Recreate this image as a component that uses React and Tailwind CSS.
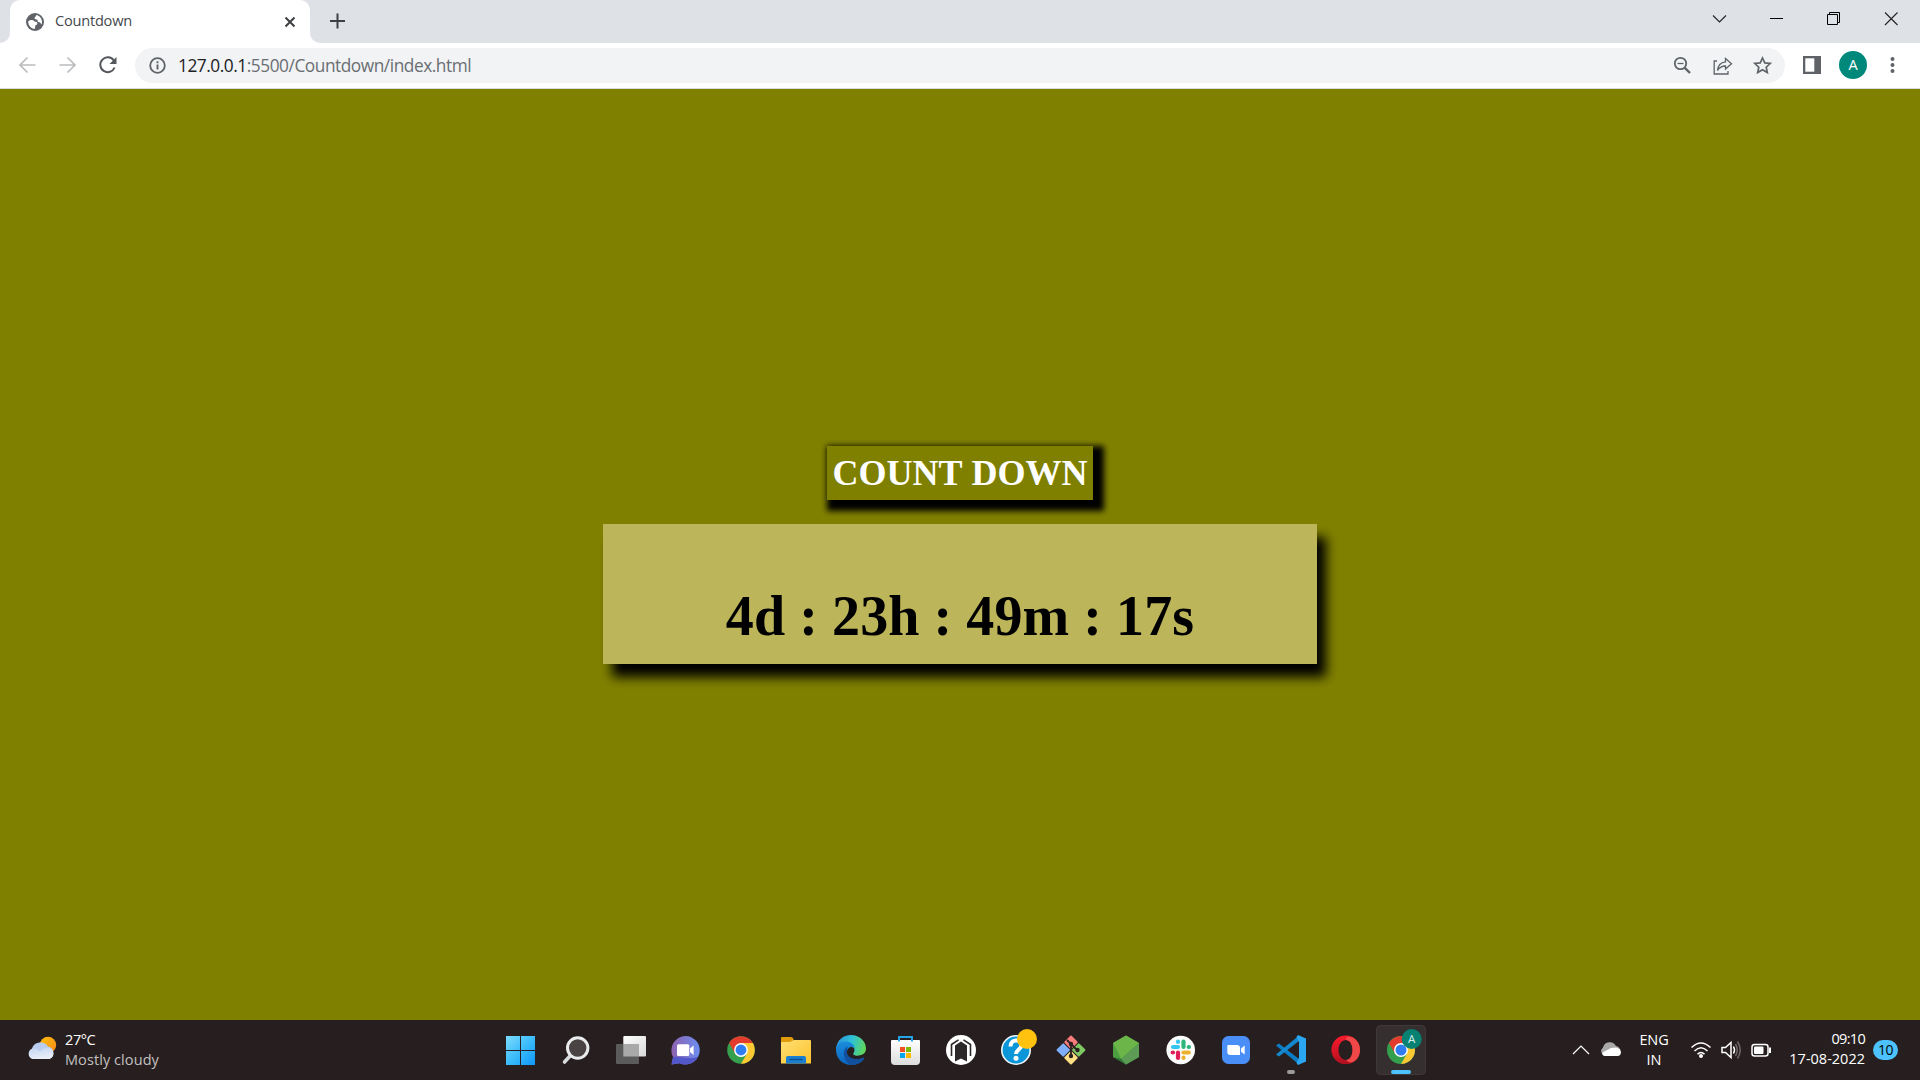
import React from "react";

const UI = "font-['Open_Sans','Noto_Sans',sans-serif]";

function Cell({ children }) {
  return (
    <svg width="55" height="60" viewBox="0 0 55 60" className="block shrink-0">
      {children}
    </svg>
  );
}

/* ---------- browser chrome ---------- */

function Globe() {
  return (
    <svg width="18" height="18" viewBox="0 0 18 18" className="block shrink-0">
      <circle cx="9" cy="9" r="9" fill="#5f6368" />
      <path
        d="M2.200 8.200 C4 6.800 7 6.500 7.600 7.600 C8 8.400 8.600 8.600 9.600 8.800 C11 9 11.600 10 11.300 11 C11 12 9.600 11.800 9.200 12.800 L9 15.800 C5 15.600 2 12.600 2.200 8.200 Z"
        fill="#fff"
      />
      <path
        d="M10.400 2.100 C13.600 2.800 16 5.600 16 9 C16 10 15.800 10.800 15.500 11.500 C14.900 10.800 14.600 9.600 13.600 9.200 L12 8.900 C11.200 8.400 12 6.800 11 6.600 C9.600 6.400 8.600 6 8.600 5 C8.600 3.800 10 3.800 10.400 2.100 Z"
        fill="#fff"
      />
    </svg>
  );
}

function TabStrip() {
  return (
    <div className="flex h-[43px] items-start bg-[#dee1e6]">
      <div className="flex h-[43px] w-[10px] items-end bg-white">
        <div className="h-full w-[10px] rounded-br-[10px] bg-[#dee1e6]" />
      </div>
      <div className="flex h-[43px] w-[300px] items-center rounded-t-[10px] bg-white pl-4 pr-[14px]">
        <Globe />
        <span className={`${UI} -mt-[3px] ml-[11px] flex-1 whitespace-nowrap text-[14.600px] leading-5 tracking-[-0.230px] text-[#45484d]`}>
          Countdown
        </span>
        <svg width="12" height="12" viewBox="0 0 12 12" className="block">
          <path d="M1.500 1.500 L10.500 10.500 M10.500 1.500 L1.500 10.500" stroke="#3c4043" strokeWidth="2" />
        </svg>
      </div>
      <div className="h-[43px] w-[10px] bg-white">
        <div className="h-full w-full rounded-bl-[10px] bg-[#dee1e6]" />
      </div>
      <svg width="16" height="16" viewBox="0 0 16 16" className="ml-[10px] mt-[13px] block">
        <path d="M7.500 0.500 V15.500 M0 8 H15" stroke="#3c4043" strokeWidth="2" />
      </svg>
      <div className="flex-1" />
      <svg width="220" height="43" viewBox="0 0 220 43" className="block" fill="none">
        <path d="M13 15.500 L19.500 22 L26 15.500" stroke="#222" strokeWidth="1.100" />
        <path d="M70 18.500 H83" stroke="#000" strokeWidth="1" />
        <path d="M127.500 14.500 H137.500 V24.500 H127.500 Z M129.500 14.500 V12.500 H139.500 V22.500 H137.500" stroke="#000" strokeWidth="1" />
        <path d="M185 12.500 L197.500 25 M197.500 12.500 L185 25" stroke="#222" strokeWidth="1.100" />
      </svg>
    </div>
  );
}

function Toolbar() {
  return (
    <div className="flex h-[46px] items-start border-b border-[#d9dbdf] bg-white pt-[5px]">
      <svg width="135" height="35" viewBox="0 48 135 35" className="block" fill="none" strokeWidth="1.700">
        <path d="M35.500 65 H20.500 M27.500 57.500 L20 65 L27.500 72.500" stroke="#babcbe" />
        <path d="M59.500 65 H74.500 M67.500 57.500 L75 65 L67.500 72.500" stroke="#babcbe" />
        <path d="M113.800 60.500 A7.400 7.400 0 1 0 114.600 67.500" stroke="#54585d" strokeWidth="2" />
        <path d="M116.500 57 V64 H109.500 Z" fill="#54585d" />
      </svg>
      <div className="flex h-[35px] w-[1650px] items-center rounded-full bg-[#f1f3f4] pl-[14px]">
        <svg width="17" height="17" viewBox="0 0 17 17" className="block shrink-0">
          <circle cx="8.500" cy="8.500" r="7.300" fill="none" stroke="#5f6368" strokeWidth="1.800" />
          <path d="M8.500 7.500 V12.500 M8.500 4.300 V6.200" stroke="#5f6368" strokeWidth="1.900" />
        </svg>
        <span className={`${UI} ml-[12px] flex-1 whitespace-nowrap text-[17.300px] leading-6 tracking-[-0.460px] text-[#6a6e73]`}>
          <span className="text-[#202124]">127.0.0.1</span>:5500/Countdown/index.html
        </span>
        <svg width="112" height="35" viewBox="1673 48 112 35" className="block shrink-0" fill="none" stroke="#5f6368">
          <circle cx="1680.500" cy="63.500" r="5.700" strokeWidth="1.800" />
          <path d="M1677.500 63.500 H1683.500" strokeWidth="1.300" />
          <path d="M1684.800 67.800 L1690 73" strokeWidth="2.400" />
          <path d="M1717 61 H1714.200 V74 H1728 V71" strokeWidth="1.300" />
          <path d="M1717.500 70.500 C1718 64.500 1721 62.300 1725.500 61.800 V58.500 L1731.500 63.700 L1725.500 69 V66 C1722 66 1719.500 67.300 1717.500 70.500 Z" strokeWidth="1.300" />
          <path d="M1762.500 58 L1764.800 62.900 L1770.200 63.500 L1766.200 67.200 L1767.300 72.500 L1762.500 69.800 L1757.700 72.500 L1758.800 67.200 L1754.800 63.500 L1760.200 62.900 Z" strokeWidth="1.700" />
        </svg>
      </div>
      <svg width="18" height="18" viewBox="0 0 18 18" className="ml-[18px] mt-2 block">
        <rect width="18" height="18" fill="#5f6368" />
        <rect x="2.300" y="2.300" width="9" height="13.400" fill="#fff" />
      </svg>
      <div className={`${UI} ml-[18px] mt-[3px] flex size-7 items-center justify-center rounded-full bg-[#00897b] text-[14.500px] text-white`}>
        A
      </div>
      <svg width="5" height="18" viewBox="0 0 5 18" className="ml-[23px] mt-2 block" fill="#5f6368">
        <circle cx="2.500" cy="3" r="2" />
        <circle cx="2.500" cy="9" r="2" />
        <circle cx="2.500" cy="15" r="2" />
      </svg>
    </div>
  );
}

/* ---------- page ---------- */

function Page() {
  return (
    <main className="flex h-[931px] flex-col items-center bg-[#808000] pt-[357px] font-['Liberation_Serif',serif] font-bold [font-kerning:none]">
      <h1 className="flex h-[54px] w-[266px] items-center justify-center whitespace-nowrap bg-[#808000] text-[36px] leading-none text-white shadow-[5.500px_5.500px_6px_5.500px_#000]">
        COUNT DOWN
      </h1>
      <div className="mt-6 flex h-[140px] w-[714px] items-end justify-center whitespace-nowrap bg-[#bcb55a] pb-[20px] text-[56px] leading-none tracking-[0.080px] text-black shadow-[9px_13px_11px_0px_#000]">
        4d : 23h : 49m : 17s
      </div>
    </main>
  );
}

/* ---------- taskbar icons ---------- */

function ChromeMark({ r = 14 }) {
  return (
    <g transform={`translate(28 30) scale(${r / 14})`}>
      <circle r="14" fill="#34a04e" />
      <path d="M-12.120 -7 A14 14 0 0 1 12.120 -7 L6 -7 H0 L-6 3.500 Z" fill="#e33b2e" />
      <path d="M12.120 -7 A14 14 0 0 1 0 14 L6.100 3.500 L0 -7 Z" fill="#fcc934" />
      <circle r="7" fill="#fff" />
      <circle r="5.500" fill="#2f7df0" />
    </g>
  );
}

function Gradient({ id, from, to, x2 = 1, y2 = 1 }) {
  return (
    <linearGradient id={id} x1="0" y1="0" x2={x2} y2={y2}>
      <stop stopColor={from} />
      <stop offset="1" stopColor={to} />
    </linearGradient>
  );
}

function TaskIcons() {
  return (
    <div className="flex h-[60px]">
      <Cell>
        <defs>
          <linearGradient id="win" gradientUnits="userSpaceOnUse" x1="13" y1="16" x2="42" y2="45">
            <stop stopColor="#7edcfd" />
            <stop offset=".55" stopColor="#36b9fb" />
            <stop offset="1" stopColor="#1096f8" />
          </linearGradient>
        </defs>
        <path d="M13 16 H27 V30 H13 Z M28 16 H42 V30 H28 Z M13 31 H27 V45 H13 Z M28 31 H42 V45 H28 Z" fill="url(#win)" />
      </Cell>
      <Cell>
        <path d="M22.500 35.500 L16.500 42" stroke="#d9dcde" strokeWidth="3.600" strokeLinecap="round" />
        <circle cx="29.700" cy="28" r="10.200" fill="#4a4343" stroke="#e9ebec" strokeWidth="3" />
      </Cell>
      <Cell>
        <defs><Gradient id="tv" from="#ffffff" to="#d8d8d8" /></defs>
        <rect x="20.300" y="16" width="22.700" height="20.500" rx="1" fill="url(#tv)" />
        <rect x="13" y="24" width="23" height="20" rx="1" fill="#5b5b5b" />
        <rect x="20.300" y="24" width="15.700" height="12.500" fill="#a9a9a9" />
      </Cell>
      <Cell>
        <defs><Gradient id="chat" from="#8d62ae" to="#6d8df0" y2={0} /></defs>
        <path d="M27.500 16 A14.300 14.300 0 1 1 21.500 43.300 L13.500 44.500 L15 37 A14.300 14.300 0 0 1 27.500 16 Z" fill="url(#chat)" />
        <path d="M13.500 44.500 L15 37 C19 36 32 40 40 36.500 A14.300 14.300 0 0 1 21.500 43.300 Z" fill="#5257ca" />
        <rect x="19" y="24.300" width="12.300" height="11.700" rx="1.500" fill="#fff" />
        <path d="M32 28.500 L35.600 25.500 V35 L32 32 Z" fill="#fff" />
      </Cell>
      <Cell><ChromeMark r={13.8} /></Cell>
      <Cell>
        <defs><Gradient id="fold" from="#ffdf73" to="#fdc32e" /></defs>
        <path d="M13 17.500 Q13 17 14 17 H23 Q24.500 17 25.500 19 L26 22 H13 Z" fill="#e09c0c" />
        <path d="M13 22 H22 L26 20 H42 Q43 20 43 21 V43.500 H13 Z" fill="url(#fold)" />
        <path d="M18 43.500 V38 Q18 36 20 36 H36 Q38 36 38 38 V43.500 Z" fill="#1b7fd0" />
        <path d="M21.500 39.500 H34.500" stroke="#0b4f91" strokeWidth="1.400" />
      </Cell>
      <Cell>
        <defs>
          <linearGradient id="edge" x1="0" y1=".4" x2="1" y2=".6">
            <stop stopColor="#2a93dd" /><stop offset=".5" stopColor="#2fc2d4" /><stop offset="1" stopColor="#62d853" />
          </linearGradient>
          <Gradient id="edge2" from="#1b8fdd" to="#0c63bd" x2={0.2} />
        </defs>
        <path d="M13 29 C14 20 20 15 28 15 C37 15 43 21.500 43 28.500 C43 33.500 39 36 35 36 C32 36 29.500 35.300 30 33.700 C32 31.500 31 27 25.500 25.500 Z" fill="url(#edge)" />
        <path d="M13 30 C13 24 18.500 21 24 21.500 C28.500 22 32 25.500 31.500 29 C29 25 24.500 27.500 24.500 32.500 C24.500 38 30 41.500 39 38 C42 37 41.500 38.500 40.500 39.500 C37.500 43.500 33 45 28 45 C19.500 45 13 38.500 13 30 Z" fill="url(#edge2)" />
        <path d="M24.500 26.500 C19.500 29.500 19 38 27 44.900 C33 45.300 38 43 41 38.500 C41.500 37.500 41 37 40 37.500 C30 41.500 22 35 24.500 26.500 Z" fill="#124f9c" />
        <path d="M25.500 28.500 C28 26.200 31.500 27 31.500 30 C31.500 32.500 29.500 32.800 30.300 34.200 C31.500 36.200 36 36.500 41.500 33.500 L41.800 36.800 C33 41 24 38 24 32 C24 30.500 24.500 29.300 25.500 28.500 Z" fill="#271f1f" />
      </Cell>
      <Cell>
        <defs><Gradient id="bag" from="#ffffff" to="#dcdcdc" x2={0} /></defs>
        <path d="M13 21 Q13 20 14 20 H41 Q42 20 42 21 V41 Q42 45 38 45 H17 Q13 45 13 41 Z" fill="url(#bag)" />
        <path d="M21 21.500 V17 H34 V21.500" fill="none" stroke="#25a5e8" strokeWidth="1.900" />
        <path d="M22 27 H27 V32 H22 Z" fill="#f25022" />
        <path d="M28 27 H33 V32 H28 Z" fill="#7fba00" />
        <path d="M22 33 H27 V38 H22 Z" fill="#00a4ef" />
        <path d="M28 33 H33 V38 H28 Z" fill="#ffb900" />
      </Cell>
      <Cell>
        <circle cx="28" cy="30" r="15" fill="#fff" />
        <path d="M22 41.500 V25.500 L28 21.500 L34 25.500 V41.500 L28 38.500 Z" fill="#2c2829" />
        <path d="M18.500 36 V24.500 L25.500 19.800 M37.500 36 V24.500 L30.500 19.800" fill="none" stroke="#2c2829" strokeWidth="1.600" />
      </Cell>
      <Cell>
        <circle cx="28" cy="30" r="14.200" fill="#0a96d8" stroke="#f2f7fa" strokeWidth="1.600" />
        <path d="M22.500 26.500 C22.500 18.500 33.500 19 33.500 25 C33.500 29.500 28 29.500 28 34" fill="none" stroke="#fff" strokeWidth="4" />
        <circle cx="28" cy="38.300" r="2.500" fill="#fff" />
        <circle cx="39" cy="19" r="10" fill="#ffc20e" />
      </Cell>
      <Cell>
        <g transform="rotate(45 28 30)">
          <rect x="17.500" y="19.500" width="10" height="10" rx="1" fill="#f77b7b" />
          <rect x="28.500" y="19.500" width="10" height="10" rx="1" fill="#80c864" />
          <rect x="17.500" y="30.500" width="10" height="10" rx="1" fill="#7faefb" />
          <rect x="28.500" y="30.500" width="10" height="10" rx="1" fill="#ffe085" />
        </g>
        <path d="M24 20 L28 24 V36 M28 24 L34 30" stroke="#2a2021" strokeWidth="1.800" fill="none" />
        <circle cx="28" cy="24" r="2.200" fill="#2a2021" />
        <circle cx="28" cy="36" r="2.200" fill="#2a2021" />
        <circle cx="34.500" cy="30" r="2.200" fill="#2a2021" />
      </Cell>
      <Cell>
        <path d="M28 15.500 L41 23 V37 L28 44.500 L15 37 V23 Z" fill="#43903d" />
        <path d="M28 15.500 L41 23 L23 39 L15 23 Z" fill="#6cb649" />
        <path d="M41 23 V37 L28 44.500 L23 39 Z" fill="#5c9c55" />
        <path d="M15 23 L23 39 L15 37 Z" fill="#4b9f40" />
        <path d="M15 37 L23 39 L28 44.500 Z" fill="#2c7431" />
      </Cell>
      <Cell>
        <circle cx="27.700" cy="30" r="14.300" fill="#fff" />
        <g strokeWidth="4.200" strokeLinecap="round" fill="none">
          <path d="M20 27 H25" stroke="#36c5f0" />
          <path d="M25 21.500 V22" stroke="#36c5f0" />
          <path d="M30.500 21.500 V27" stroke="#2eb67d" />
          <path d="M35.700 27 H36" stroke="#2eb67d" />
          <path d="M30.500 32.500 H35.800" stroke="#ecb22e" />
          <path d="M30.500 37.700 V38" stroke="#ecb22e" />
          <path d="M25 32.500 V38" stroke="#e01e5a" />
          <path d="M19.700 32.500 H20" stroke="#e01e5a" />
        </g>
      </Cell>
      <Cell>
        <rect x="14" y="16" width="28" height="28" rx="6.500" fill="#4a8ff8" />
        <path d="M19.300 26 Q19.300 25 20.300 25 H29 Q32 25 32 28 V35 H22.300 Q19.300 35 19.300 32 Z" fill="#fff" />
        <path d="M33 28.500 L36.700 25.500 V34.500 L33 31.700 Z" fill="#fff" />
      </Cell>
      <Cell>
        <path d="M13 25.500 L16 23.500 L36 39 V44.500 Z" fill="#0c7dc4" />
        <path d="M13 34.500 L16 36.500 L36 21 V15.500 Z" fill="#1488cf" />
        <path d="M35 15 L43 18.500 V41.500 L35 45 L33.500 43 L36 38 V22 L33.500 17 Z" fill="#2aa7f0" />
        <rect x="24" y="50" width="8" height="4" rx="2" fill="#9d9a9a" />
      </Cell>
      <Cell>
        <defs><Gradient id="op" from="#ff1b2d" to="#b3101f" x2={0.2} /></defs>
        <path fillRule="evenodd" d="M27.700 15.500 A14.300 14.300 0 1 0 27.700 44.100 A14.300 14.300 0 1 0 27.700 15.500 Z M28 20 C31.500 20 34.500 24 34.500 30 C34.500 36 31.500 40 28 40 C24 40 20.500 36 20.500 30 C20.500 24 24 20 28 20 Z" fill="url(#op)" />
        <path d="M27.700 18 C31 15.500 36 17.500 38.500 20.500 C43.200 25.500 43.200 34.500 38.500 39.500 C35 43 31 43.500 28 40 C31.500 40 34.500 36 34.500 30 C34.500 24 31.500 20 28 20 Z" fill="#f04848" />
      </Cell>
      <Cell>
        <rect x="3.500" y="5.500" width="49" height="49" rx="4" fill="#352f2f" stroke="#3f3939" />
        <ChromeMark />
        <circle cx="38.700" cy="19" r="10" fill="#078172" />
        <text x="38.700" y="23.300" textAnchor="middle" fontSize="11.500" fill="#d9efec" fontFamily="Open Sans, sans-serif">A</text>
        <rect x="18" y="50" width="20" height="4" rx="2" fill="#4cc2ff" />
      </Cell>
    </div>
  );
}

function Weather() {
  return (
    <div className="flex w-[493px] items-start pl-[26px]">
      <svg width="32" height="60" viewBox="26 0 32 60" className="block">
        <defs>
          <Gradient id="sun" from="#fdc00c" to="#f6871c" />
          <Gradient id="cl" from="#c3d5f1" to="#e8eef8" x2={0.3} />
        </defs>
        <circle cx="48" cy="25" r="8.200" fill="url(#sun)" />
        <path d="M33 39 A6 6 0 0 1 31.800 29 A9 9 0 0 1 48 26.500 A6.500 6.500 0 0 1 49 39 Z" fill="#b9cdf0" />
        <path d="M32.500 39 A5.500 5.500 0 0 1 32.500 28.500 Q37 27.800 40 31.500 Q44 27 49 28 A5.700 5.700 0 0 1 49.500 39 Z" fill="url(#cl)" />
      </svg>
      <div className={`${UI} ml-[7px] mt-[10px] whitespace-nowrap text-[14.500px] leading-5`}>
        <div className="tracking-[-0.400px] text-white">27°C</div>
        <div className="tracking-[0.080px] text-[#c3c0c0]">Mostly cloudy</div>
      </div>
    </div>
  );
}

function Tray() {
  return (
    <div className={`${UI} flex text-[14.500px] leading-5 text-white`}>
      <svg width="62" height="60" viewBox="1570 0 62 60" className="block" fill="none">
        <path d="M1573 34 L1581 26 L1589 34" stroke="#fff" strokeWidth="1.200" />
        <path d="M1605 35.500 A4.500 4.500 0 0 1 1603 27.500 A7 7 0 0 1 1616 26 A5 5 0 0 1 1620 33 Z" fill="#aaa8a8" />
        <path d="M1604 36 Q1601.500 34 1602.500 32.500 L1611 28 L1616 27.500 Q1620.500 28.500 1621 32.500 Q1620.500 36 1617.500 36 Z" fill="#fff" />
      </svg>
      <div className="mt-[10px] w-[44px] text-center tracking-[-0.100px]">
        <div>ENG</div>
        <div>IN</div>
      </div>
      <svg width="104" height="60" viewBox="1676 0 104 60" className="block" fill="none" stroke="#fff" strokeWidth="1.500">
        <path d="M1691.500 27.500 Q1701 18.500 1710.500 27.500 M1694.500 31 Q1701 24.500 1707.500 31 M1697.500 34.300 Q1701 30.700 1704.500 34.300" />
        <circle cx="1701" cy="36" r="2" fill="#fff" stroke="none" />
        <path d="M1722 27.500 H1725.500 L1731 22.500 V37.500 L1725.500 32.500 H1722 Z" />
        <path d="M1733.500 26.500 Q1735.500 30 1733.500 33.500" />
        <path d="M1735.500 24 Q1739 30 1735.500 36 M1737.500 21.500 Q1743 30 1737.500 38.500" stroke="#6d6868" />
        <rect x="1752" y="24.500" width="16" height="11.500" rx="2.500" />
        <rect x="1754" y="26.500" width="9.500" height="7.500" rx="1" fill="#fff" stroke="none" />
        <path d="M1770 27.500 V33" strokeWidth="2" />
      </svg>
      <div className="mt-[9px] w-[85px] whitespace-nowrap text-right">
        <div className="tracking-[-0.700px]">09:10</div>
        <div className="tracking-[0px]">17-08-2022</div>
      </div>
      <div className="ml-2 mr-[22px] mt-5 flex h-5 w-[25px] items-center justify-center rounded-full bg-[#4cc2ff] text-[14px] tracking-[-0.600px] text-black">
        10
      </div>
    </div>
  );
}

export default function App() {
  return (
    <div className="flex h-[1080px] w-[1920px] flex-col overflow-hidden">
      <TabStrip />
      <Toolbar />
      <Page />
      <footer className="flex h-[60px] bg-[#271f1f]">
        <Weather />
        <TaskIcons />
        <div className="flex-1" />
        <Tray />
      </footer>
    </div>
  );
}
